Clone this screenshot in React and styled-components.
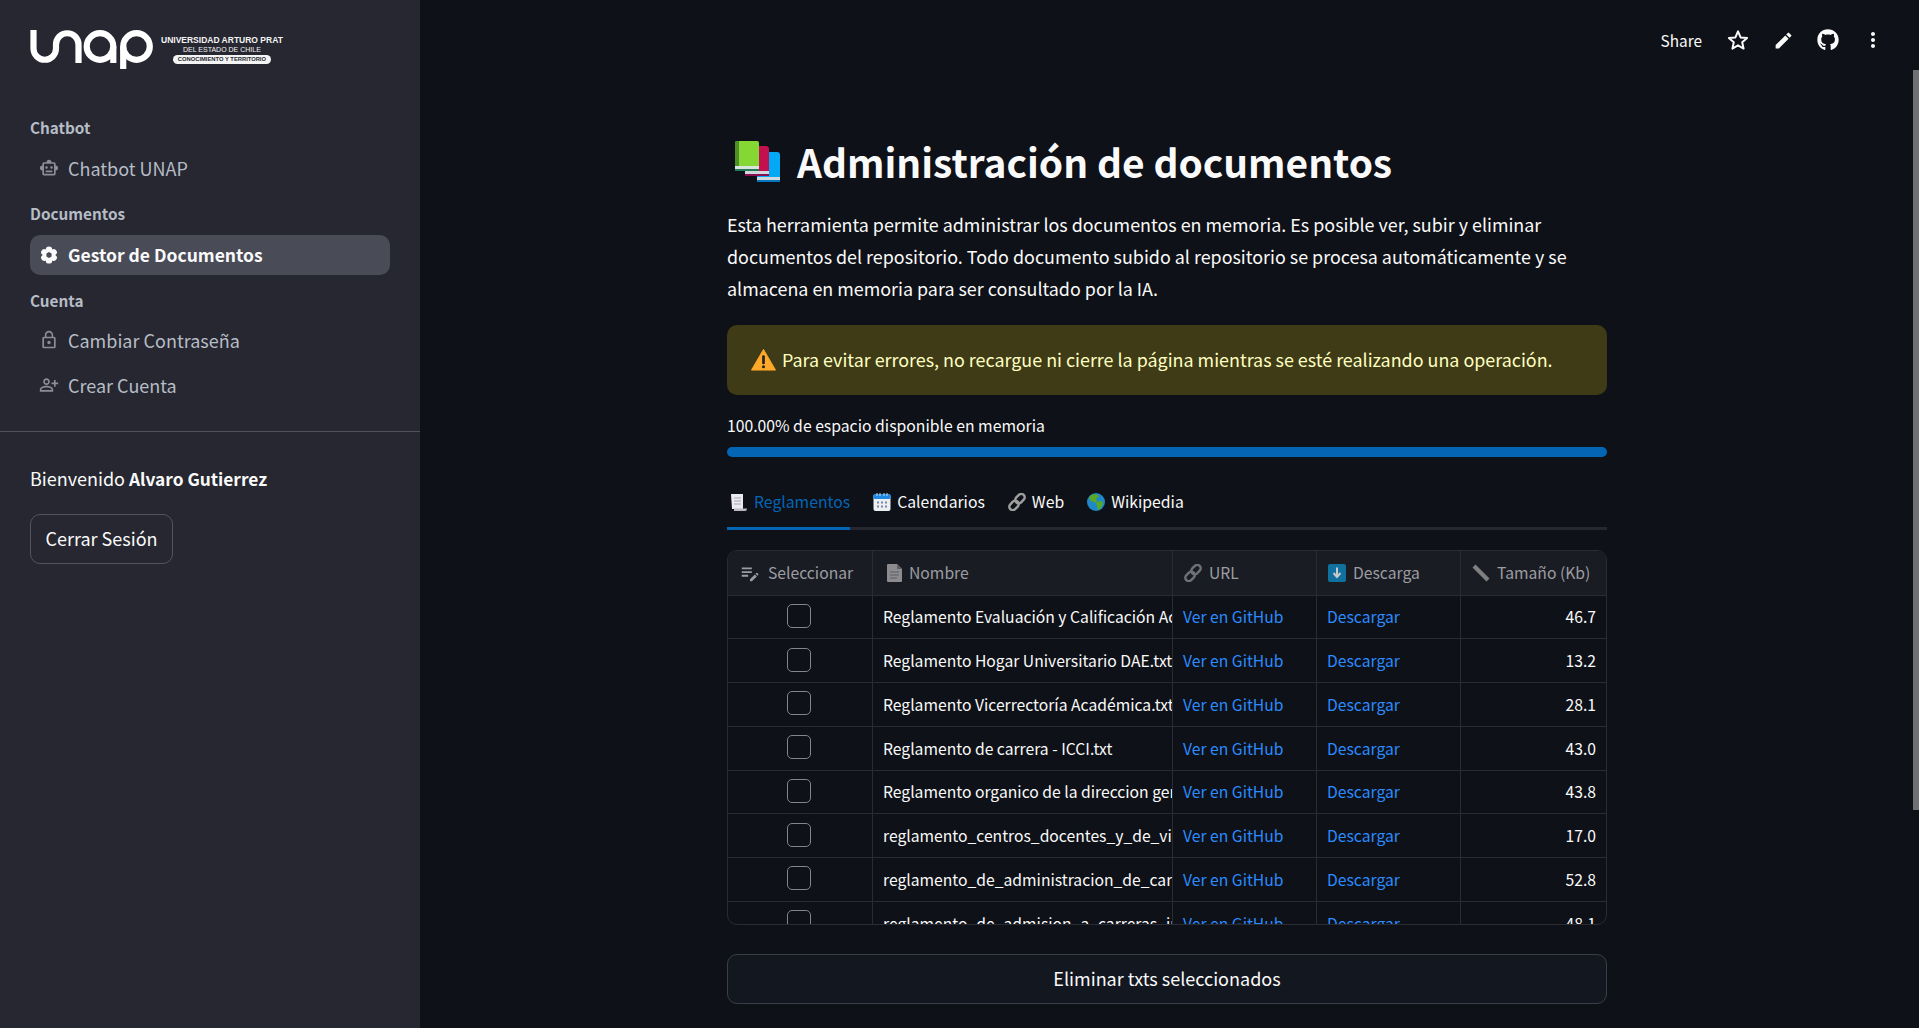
import React from "react";
import styled, { createGlobalStyle } from "styled-components";
import {
  MdOutlineSmartToy,
  MdLockOutline,
  MdOutlinePersonAddAlt,
  MdEdit,
  MdMoreVert,
  MdEditNote,
} from "react-icons/md";
import { FaGithub } from "react-icons/fa";

const GlobalStyle = createGlobalStyle`
  html, body { margin: 0; padding: 0; height: 100%; overflow: hidden; background: #0e1117; }
  body { font-family: "Noto Sans CJK SC", "Open Sans", sans-serif; color: #fafafa; }
  * { box-sizing: border-box; }
`;

const Page = styled.div`
  display: flex;
  height: 1028px;
  overflow: hidden;
  position: relative;
`;

const Sidebar = styled.aside`
  width: 420px;
  flex: none;
  background: #262730;
  display: flex;
  flex-direction: column;
`;

const LogoRow = styled.div`
  display: flex;
  align-items: center;
  gap: 7px;
  padding: 30px 0 0 30px;
  height: 70px;
`;

const LogoWords = styled.div`
  display: flex;
  flex-direction: column;
  align-items: center;
  color: #f4f4f4;
  font-family: "Liberation Sans", sans-serif;
`;

const LogoLine = styled.span`
  font-size: ${(p) => p.$size}px;
  font-weight: ${(p) => (p.$bold ? 700 : 400)};
  line-height: 9px;
  white-space: nowrap;
`;

const LogoPill = styled.span`
  margin-top: 1.5px;
  background: #f4f4f4;
  color: #262730;
  border-radius: 5px;
  font-size: 5.8px;
  font-weight: 700;
  line-height: 9px;
  padding: 0 5px;
  white-space: nowrap;
`;

const Nav = styled.nav`
  display: flex;
  flex-direction: column;
  padding: 42px 30px 0;
`;

const NavHeading = styled.div`
  font-size: 15.3px;
  font-weight: 700;
  line-height: 30px;
  height: 30px;
  color: #b6bcc6;
  margin-top: ${(p) => p.$top || 0}px;
`;

const NavItem = styled.a`
  display: flex;
  align-items: center;
  height: 40px;
  margin-top: ${(p) => p.$top || 0}px;
  padding: 0 0 ${(p) => (p.$active ? 0 : 2)}px 10px;
  gap: 10px;
  border-radius: 10px;
  font-size: ${(p) => (p.$active ? 17.5 : 18)}px;
  line-height: 28px;
  font-weight: ${(p) => (p.$active ? 700 : 400)};
  color: ${(p) => (p.$active ? "#fafafa" : "#b6bcc6")};
  background: ${(p) => (p.$active ? "#494b57" : "transparent")};
  svg { flex: none; margin: 0 -1px; color: ${(p) => (p.$active ? "#fafafa" : "#8c8e96")}; }
`;

const Divider = styled.hr`
  border: 0;
  height: 1px;
  margin: 25px 0 0;
  background: #51525b;
`;

const UserBlock = styled.div`
  padding: 30px 30px 0;
`;

const Welcome = styled.p`
  margin: 0;
  font-size: 18px;
  line-height: 32px;
  height: 32px;
  b { font-weight: 700; font-size: 17.3px; line-height: 1; }
`;

const LogoutButton = styled.button`
  display: block;
  margin-top: 20px;
  width: 143px;
  height: 50px;
  background: transparent;
  color: #fafafa;
  border: 1px solid #53545c;
  border-radius: 10px;
  font: inherit;
  font-size: 18px;
  padding: 0 0 2px;
`;

const Main = styled.main`
  flex: 1;
  min-width: 0;
  display: flex;
  flex-direction: column;
`;

const Toolbar = styled.header`
  display: flex;
  align-items: center;
  justify-content: flex-end;
  height: 80px;
  padding-right: 35px;
  gap: 23px;
`;

const ShareLabel = styled.span`
  font-size: 15.4px;
  line-height: 24px;
  margin-right: 2px;
  padding-bottom: 1px;
`;

const ToolIcon = styled.span`
  display: flex;
  width: 22px;
  justify-content: center;
  svg { flex: none; }
`;

const Content = styled.section`
  width: 880px;
  margin-left: 307px;
  display: flex;
  flex-direction: column;
`;

const Title = styled.h1`
  display: flex;
  align-items: center;
  gap: 16px;
  margin: 43px 0 0 0;
  height: 76px;
  font-size: 38.9px;
  font-weight: 700;
  line-height: 76px;
  padding-left: 8px;
  white-space: nowrap;
  svg { margin-top: 2px; }
`;

const Intro = styled.p`
  margin: 9px 0 0;
  font-size: 17.9px;
  line-height: 32px;
`;

const Alert = styled.div`
  display: flex;
  align-items: center;
  gap: 6px;
  height: 70px;
  margin-top: 21px;
  padding: 0 0 2px 24px;
  border-radius: 10px;
  background: #3e3b16;
  color: #ffffc2;
  font-size: 17.9px;
  white-space: nowrap;
`;

const ProgressLabel = styled.div`
  font-size: 15.75px;
  line-height: 24px;
  margin-top: 19px;
`;

const ProgressTrack = styled.div`
  height: 10px;
  margin-top: 9px;
  border-radius: 5px;
  background: #0565b5;
`;

const TabBar = styled.div`
  display: flex;
  gap: 20px;
  margin-top: 30px;
  height: 43px;
  border-bottom: 3px solid #262730;
`;

const Tab = styled.div`
  display: flex;
  align-items: center;
  gap: 5px;
  height: 43px;
  padding-bottom: 11px;
  font-size: 15.75px;
  color: ${(p) => (p.$active ? "#0565b5" : "#fafafa")};
  border-bottom: 3px solid ${(p) => (p.$active ? "#0565b5" : "transparent")};
  svg { margin: 0 1px 0 3px; }
`;

const Table = styled.div`
  margin-top: 20px;
  height: 375px;
  overflow: hidden;
  border: 1px solid #2a2c33;
  border-radius: 10px;
  display: grid;
  grid-template-columns: 145px 300px 144px 144px 1fr;
  grid-template-rows: 44.5px;
  grid-auto-rows: 43.75px;
  font-size: 15.7px;
`;

const HeadCell = styled.div`
  display: flex;
  align-items: center;
  gap: 7px;
  padding-left: ${(p) => p.$pad ?? 11}px;
  background: #1a1c24;
  color: #9c9da1;
  border-right: ${(p) => (p.$last ? "0" : "1px solid #2a2c33")};
  border-bottom: 1px solid #2a2c33;
  white-space: nowrap;
`;

const Cell = styled.div`
  display: flex;
  align-items: center;
  justify-content: ${(p) => (p.$align === "right" ? "flex-end" : p.$align === "center" ? "center" : "flex-start")};
  padding: 0 ${(p) => (p.$align === "right" ? 10 : 0)}px 0 ${(p) => (p.$align === "right" ? 0 : 10)}px;
  overflow: hidden;
  white-space: nowrap;
  color: ${(p) => (p.$link ? "#2b8bff" : "#fafafa")};
  border-right: ${(p) => (p.$last ? "0" : "1px solid #2a2c33")};
  border-bottom: 1px solid #2a2c33;
`;

const Checkbox = styled.span`
  display: block;
  width: 24px;
  height: 24px;
  margin: 0 0 2px -12px;
  border: 1.5px solid #83858a;
  border-radius: 5px;
`;

const DeleteButton = styled.button`
  margin-top: 29px;
  height: 50px;
  background: #131720;
  border: 1px solid #3b3e46;
  border-radius: 10px;
  color: #fafafa;
  font: inherit;
  font-size: 18px;
  padding: 0 0 2px;
`;

const ScrollThumb = styled.div`
  position: absolute;
  top: 70px;
  right: 0;
  width: 6px;
  height: 740px;
  background: #6f7073;
`;

function Logo() {
  return (
    <svg width="124" height="40" viewBox="0 0 124 40" fill="none" stroke="#fff" strokeWidth="6.2">
      <path d="M3.5 0 V18.5 A11.25 11.25 0 0 0 26 18.5 V14.5 A11.25 11.25 0 0 1 48.5 14.5 V33" />
      <circle cx="70" cy="16.5" r="13.3" />
      <path d="M83.3 16.5 V33" />
      <circle cx="106.5" cy="16.5" r="13.3" />
      <path d="M93.2 16.5 V39" />
    </svg>
  );
}

function StarIcon() {
  return (
    <svg width="22" height="22" viewBox="0 0 22 22" fill="none" stroke="currentColor" strokeWidth="2" strokeLinejoin="round">
      <path d="M11 2.4 L13.6 8.4 L20.1 9 L15.2 13.3 L16.6 19.6 L11 16.3 L5.4 19.6 L6.8 13.3 L1.9 9 L8.4 8.4z" />
    </svg>
  );
}

function BooksEmoji() {
  return (
    <svg width="46" height="42" viewBox="0 0 46 42">
      <path d="M22 11 h20 a3 3 0 0 1 3 3 v27 h-23z" fill="#03a9f4" />
      <rect x="22" y="36" width="23" height="3" fill="#cfd8dc" />
      <rect x="22" y="39" width="23" height="2" fill="#0277bd" />
      <path d="M10 5 h21 a3 3 0 0 1 3 3 v27 h-24z" fill="#c2114e" />
      <rect x="10" y="30" width="24" height="3" fill="#cfd8dc" />
      <rect x="10" y="33" width="24" height="2" fill="#880e4f" />
      <path d="M2 0 h20 a2 2 0 0 1 2 2 v28 h-24 v-28 a2 2 0 0 1 2 -2z" fill="#85d833" />
      <path d="M2 0 h2 v30 h-4 v-28 a2 2 0 0 1 2 -2z" fill="#4c8f27" />
      <rect x="0" y="25" width="24" height="3" fill="#d7e3dc" />
      <rect x="0" y="28" width="24" height="2" fill="#1f7a55" />
    </svg>
  );
}

function WarningEmoji() {
  return (
    <svg width="25" height="23" viewBox="0 0 26 23">
      <path d="M13 1 L25.5 22.5 H.5z" fill="#ffa928" stroke="#ffa928" strokeLinejoin="round" />
      <rect x="11.6" y="7" width="2.8" height="9.5" rx="1.2" fill="#222" />
      <circle cx="13" cy="19" r="1.6" fill="#222" />
    </svg>
  );
}

function ScrollEmoji() {
  return (
    <svg width="18" height="18" viewBox="0 0 18 18">
      <path d="M1 1 h12 v15 h-11z" fill="#eceaf2" />
      <path d="M4 15.5 h13 q0 2.5 -2 2.5 h-11z" fill="#bdb8c4" />
      <path d="M4 5 h7 M4 8 h7 M4 11 h7" stroke="#a7a3b3" strokeWidth="1.2" />
    </svg>
  );
}

function CalendarEmoji() {
  return (
    <svg width="18" height="18" viewBox="0 0 18 18">
      <rect x="0.5" y="1" width="17" height="17" rx="2" fill="#eceff1" />
      <rect x="0.5" y="1" width="17" height="5" rx="1.5" fill="#1e88e5" />
      <path d="M4 0 v3 M7 0 v3 M11 0 v3 M14 0 v3" stroke="#cfd8dc" strokeWidth="1" />
      <path d="M4 8.5 h2 v2 h-2z M8 8.5 h2 v2 h-2z M12 8.5 h2 v2 h-2z M4 12.5 h2 v2 h-2z M8 12.5 h2 v2 h-2z M12 12.5 h2 v2 h-2z" fill="#7986a8" />
    </svg>
  );
}

function LinkEmoji({ color = "#9e9e9e" }) {
  return (
    <svg width="18" height="18" viewBox="0 0 18 18" fill="none" stroke={color} strokeWidth="2.5">
      <rect x="6.8" y="2.2" width="10.4" height="6.8" rx="3.4" transform="rotate(-45 12 5.6)" />
      <rect x="0.8" y="9" width="10.4" height="6.8" rx="3.4" transform="rotate(-45 6 12.4)" />
    </svg>
  );
}

function GlobeEmoji() {
  return (
    <svg width="18" height="18" viewBox="0 0 18 18">
      <circle cx="9" cy="9" r="9" fill="#1e88c9" />
      <path d="M4 2 q4 -1.5 7 0 l1 2 -3 1 1 3 -2 2 -1 -1 -3 -1 -2 -3z" fill="#5aa823" />
      <path d="M9 9 l6 -1 1 3 -3 5 -2 1 -1 -4z" fill="#5aa823" />
    </svg>
  );
}

function PageEmoji() {
  return (
    <svg width="15" height="18" viewBox="0 0 15 18">
      <path d="M1 0 h9 l5 5 v12 a1 1 0 0 1 -1 1 h-13 a1 1 0 0 1 -1 -1 v-16 a1 1 0 0 1 1 -1z" fill="#8b8b90" />
      <path d="M10 0 l5 5 h-5z" fill="#5f5f64" />
      <path d="M3 8 h9 M3 11 h9 M3 14 h7" stroke="#5f5f64" strokeWidth="1" />
    </svg>
  );
}

function DownloadEmoji() {
  return (
    <svg width="18" height="18" viewBox="0 0 18 18">
      <rect width="18" height="18" rx="2" fill="#10709e" />
      <path d="M9 3.5 V12 M5.5 9 L9 13 L12.5 9" stroke="#c7c9cc" strokeWidth="2" fill="none" />
    </svg>
  );
}

function RulerEmoji() {
  return (
    <svg width="18" height="18" viewBox="0 0 18 18">
      <path d="M3.5 0.5 L17.5 14.5 L14.5 17.5 L0.5 3.5z" fill="#7f7f82" />
    </svg>
  );
}

function GearIcon() {
  const petals = [0, 60, 120, 180, 240, 300];
  return (
    <svg width="20" height="20" viewBox="-1 -1 20 20">
      {petals.map((deg) => (
        <circle key={deg} cx="9" cy="3.6" r="3.2" fill="currentColor" transform={`rotate(${deg} 9 9)`} />
      ))}
      <circle cx="9" cy="9" r="5" fill="currentColor" />
      <path d="M9 6 L11.6 7.5 V10.5 L9 12 L6.4 10.5 V7.5z" fill="#494b57" />
    </svg>
  );
}

const rows = [
  ["Reglamento Evaluación y Calificación Académica.txt", "46.7"],
  ["Reglamento Hogar Universitario DAE.txt", "13.2"],
  ["Reglamento Vicerrectoría Académica.txt", "28.1"],
  ["Reglamento de carrera - ICCI.txt", "43.0"],
  ["Reglamento organico de la direccion general.txt", "43.8"],
  ["reglamento_centros_docentes_y_de_vinculacion.txt", "17.0"],
  ["reglamento_de_administracion_de_carreras.txt", "52.8"],
  ["reglamento_de_admision_a_carreras_ingenieria.txt", "48.1"],
];

export default function App() {
  return (
    <Page>
      <GlobalStyle />
      <Sidebar>
        <LogoRow>
          <Logo />
          <LogoWords>
            <LogoLine $size={8.5} $bold>UNIVERSIDAD ARTURO PRAT</LogoLine>
            <LogoLine $size={7}>DEL ESTADO DE CHILE</LogoLine>
            <LogoPill>CONOCIMIENTO Y TERRITORIO</LogoPill>
          </LogoWords>
        </LogoRow>
        <Nav>
          <NavHeading>Chatbot</NavHeading>
          <NavItem $top={7}><MdOutlineSmartToy size={20} />Chatbot UNAP</NavItem>
          <NavHeading $top={9}>Documentos</NavHeading>
          <NavItem $active $top={7}><GearIcon />Gestor de Documentos</NavItem>
          <NavHeading $top={10}>Cuenta</NavHeading>
          <NavItem $top={6}><MdLockOutline size={20} />Cambiar Contraseña</NavItem>
          <NavItem $top={5}><MdOutlinePersonAddAlt size={20} />Crear Cuenta</NavItem>
        </Nav>
        <Divider />
        <UserBlock>
          <Welcome>Bienvenido <b>Alvaro Gutierrez</b></Welcome>
          <LogoutButton>Cerrar Sesión</LogoutButton>
        </UserBlock>
      </Sidebar>
      <Main>
        <Toolbar>
          <ShareLabel>Share</ShareLabel>
          <ToolIcon><StarIcon /></ToolIcon>
          <ToolIcon><MdEdit size={21} /></ToolIcon>
          <ToolIcon><FaGithub size={22} /></ToolIcon>
          <ToolIcon><MdMoreVert size={24} /></ToolIcon>
        </Toolbar>
        <Content>
          <Title><BooksEmoji />Administración de documentos</Title>
          <Intro>
            Esta herramienta permite administrar los documentos en memoria. Es posible ver, subir y eliminar
            documentos del repositorio. Todo documento subido al repositorio se procesa automáticamente y se
            almacena en memoria para ser consultado por la IA.
          </Intro>
          <Alert><WarningEmoji />Para evitar errores, no recargue ni cierre la página mientras se esté realizando una operación.</Alert>
          <ProgressLabel>100.00% de espacio disponible en memoria</ProgressLabel>
          <ProgressTrack />
          <TabBar>
            <Tab $active><ScrollEmoji />Reglamentos</Tab>
            <Tab><CalendarEmoji />Calendarios</Tab>
            <Tab><LinkEmoji />Web</Tab>
            <Tab><GlobeEmoji />Wikipedia</Tab>
          </TabBar>
          <Table>
            <HeadCell $pad={11}><MdEditNote size={22} />Seleccionar</HeadCell>
            <HeadCell $pad={14}><PageEmoji />Nombre</HeadCell>
            <HeadCell><LinkEmoji color="#6f7073" />URL</HeadCell>
            <HeadCell><DownloadEmoji />Descarga</HeadCell>
            <HeadCell $last><RulerEmoji />Tamaño (Kb)</HeadCell>
            {rows.map(([name, size]) => (
              <React.Fragment key={name}>
                <Cell $align="center"><Checkbox /></Cell>
                <Cell>{name}</Cell>
                <Cell $link>Ver en GitHub</Cell>
                <Cell $link>Descargar</Cell>
                <Cell $align="right" $last>{size}</Cell>
              </React.Fragment>
            ))}
          </Table>
          <DeleteButton>Eliminar txts seleccionados</DeleteButton>
        </Content>
      </Main>
      <ScrollThumb />
    </Page>
  );
}
